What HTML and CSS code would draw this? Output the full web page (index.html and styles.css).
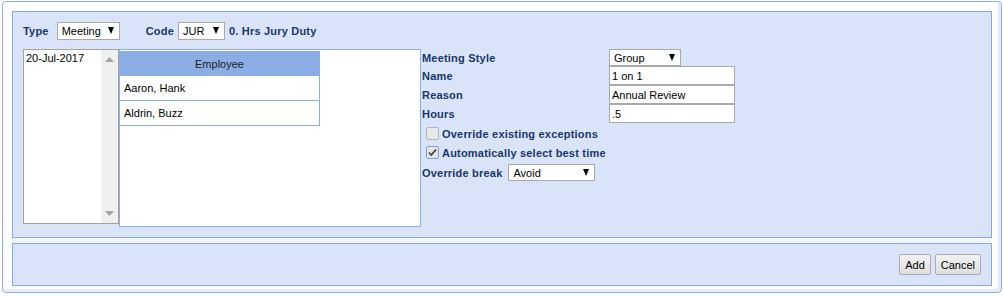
FILE: index.html
```html
<!DOCTYPE html>
<html lang="en">
<head>
    <meta charset="UTF-8">
    <title>Add Meeting</title>
    <link rel="stylesheet" href="styles.css">
</head>
<body>
<div class="dialog">
    <div class="panels">
        <div class="panel main">
            <div class="toolbar">
                <span class="lbl">Type</span>
                <span class="select type-select"><select><option>Meeting</option></select></span>
                <span class="lbl code-lbl">Code</span>
                <span class="select code-select"><select><option>JUR</option></select></span>
                <span class="lbl code-desc">0. Hrs Jury Duty</span>
            </div>
            <div class="content">
                <div class="dates">
                    <div class="date-items">
                        <div class="date-item">20-Jul-2017</div>
                    </div>
                    <div class="scrollbar">
                        <svg width="9" height="5" viewBox="0 0 9 5"><path d="M0 5 L4.5 0 L9 5 Z" fill="#a3a3a3"/></svg>
                        <svg width="9" height="5" viewBox="0 0 9 5"><path d="M0 0 L4.5 5 L9 0 Z" fill="#a3a3a3"/></svg>
                    </div>
                </div>
                <div class="employees">
                    <table class="emp-table">
                        <tr><th>Employee</th></tr>
                        <tr><td>Aaron, Hank</td></tr>
                        <tr><td>Aldrin, Buzz</td></tr>
                    </table>
                </div>
                <div class="form">
                    <div class="form-grid">
                        <span class="lbl">Meeting Style</span>
                        <span class="select style-select"><select><option>Group</option></select></span>
                        <span class="lbl">Name</span>
                        <input type="text" class="field" value="1 on 1">
                        <span class="lbl">Reason</span>
                        <input type="text" class="field" value="Annual Review">
                        <span class="lbl">Hours</span>
                        <input type="text" class="field" value=".5">
                    </div>
                    <div class="check-row first">
                        <span class="box disabled"></span>
                        <span class="lbl">Override existing exceptions</span>
                    </div>
                    <div class="check-row">
                        <span class="box checked">
                            <svg width="11" height="11" viewBox="0 0 11 11"><path d="M2 5.5 L4.3 8 L9 2.5" fill="none" stroke="#444" stroke-width="1.8"/></svg>
                        </span>
                        <span class="lbl">Automatically select best time</span>
                    </div>
                    <div class="break-row">
                        <span class="lbl">Override break</span>
                        <span class="select break-select"><select><option>Avoid</option></select></span>
                    </div>
                </div>
            </div>
        </div>
        <div class="panel footer">
            <button class="btn">Add</button>
            <button class="btn">Cancel</button>
        </div>
    </div>
</div>
</body>
</html>
```

FILE: styles.css
```css
body {
    margin: 0;
    font-family: 'Liberation Sans', Arial, sans-serif;
    font-size: 11px;
    color: #000;
    background: #fff;
}

.dialog {
    margin: 1px 0 0 2px;
    width: 1000px;
    height: 292px;
    box-sizing: border-box;
    padding: 9px 9px 6px 9px;
    border: 1px solid #8fb0df;
    border-radius: 4px;
    background: #fff;
    box-shadow: inset -3px -3px 0 #e3ecfa;
}

.panels {
    display: flex;
    flex-direction: column;
    gap: 5px;
    background: #f4f4f4;
}

.panel {
    border: 1px solid #88a9db;
    background: #dae4f8;
    box-sizing: border-box;
}

.main {
    height: 227px;
    padding: 10px 10px 0 10px;
}

.lbl {
    font-weight: bold;
    color: #17386a;
    white-space: nowrap;
    letter-spacing: 0.2px;
}

/* selects */
.select {
    position: relative;
    display: inline-block;
    height: 17px;
    box-sizing: border-box;
}

.select select {
    appearance: none;
    width: 100%;
    height: 100%;
    margin: 0;
    padding: 0 0 0 4px;
    border: 1px solid #a9a9a9;
    border-radius: 0;
    background: #fff;
    font-family: inherit;
    font-size: 11px;
    color: #000;
}

.select::after {
    content: '';
    position: absolute;
    right: 6px;
    top: 5px;
    border-left: 3.5px solid transparent;
    border-right: 3.5px solid transparent;
    border-top: 7px solid #000;
    pointer-events: none;
}

.toolbar {
    display: flex;
    align-items: center;
    height: 18px;
}

.type-select {
    width: 63px;
    height: 18px;
    margin-left: 8px;
}

.code-lbl {
    margin-left: 26px;
}

.code-select {
    width: 47px;
    height: 18px;
    margin-left: 4px;
}

.code-desc {
    margin-left: 4px;
}

.content {
    display: flex;
    align-items: flex-start;
    margin-top: 9px;
}

/* date list */
.dates {
    display: flex;
    width: 96px;
    height: 175px;
    box-sizing: border-box;
    border: 1px solid #a3a3a3;
    background: #fff;
}

.date-items {
    flex: 1;
    padding: 1px 0 0 2px;
}

.date-item {
    height: 14px;
    line-height: 14px;
}

.scrollbar {
    width: 17px;
    background: #f0f0f0;
    display: flex;
    flex-direction: column;
    justify-content: space-between;
    align-items: center;
    padding: 7px 0 7px 0;
}

/* employees */
.employees {
    width: 302px;
    height: 178px;
    box-sizing: border-box;
    border: 1px solid #8fb0df;
    background: #fff;
}

.emp-table {
    width: 200px;
    margin-top: 1px;
    border-collapse: collapse;
}

.emp-table th {
    height: 25px;
    padding: 0;
    background: #8aade6;
    font-weight: normal;
    color: #222;
    text-align: center;
    border-right: 1px solid #8aade6;
}

.emp-table td {
    height: 24px;
    padding: 0 0 0 4px;
    border-bottom: 1px solid #8aade6;
    border-right: 1px solid #8aade6;
}

/* form */
.form {
    flex: 1;
    padding-left: 1px;
}

.form-grid {
    display: grid;
    grid-template-columns: 187px 126px;
    align-items: center;
}

.style-select {
    width: 72px;
}

.field {
    width: 126px;
    height: 19px;
    box-sizing: border-box;
    margin: 0;
    padding: 0 2px;
    border: 1px solid #a9a9a9;
    font-family: inherit;
    font-size: 11px;
    color: #000;
}

.check-row {
    display: flex;
    align-items: center;
    height: 19px;
    padding-left: 4px;
}

.check-row.first {
    margin-top: 1px;
}

.box {
    width: 13px;
    height: 13px;
    box-sizing: border-box;
    margin-right: 3px;
    border: 1px solid #b5b5b5;
    border-radius: 2px;
    background: #e8e8e8;
    display: flex;
    align-items: center;
    justify-content: center;
}

.box.checked {
    border-color: #7d9fd6;
    background: #e4e4e4;
}

.break-row {
    display: flex;
    align-items: center;
    margin-top: 2px;
}

.break-select {
    width: 87px;
    margin-left: 6px;
}

/* footer */
.footer {
    height: 43px;
    display: flex;
    justify-content: flex-end;
    align-items: center;
    gap: 4px;
    padding-right: 10px;
}

.btn {
    height: 21px;
    padding: 0 5px;
    border: 1px solid #acacac;
    border-radius: 2px;
    background: linear-gradient(#f2f2f2, #dedede);
    font-family: inherit;
    font-size: 11px;
    color: #000;
}
```
